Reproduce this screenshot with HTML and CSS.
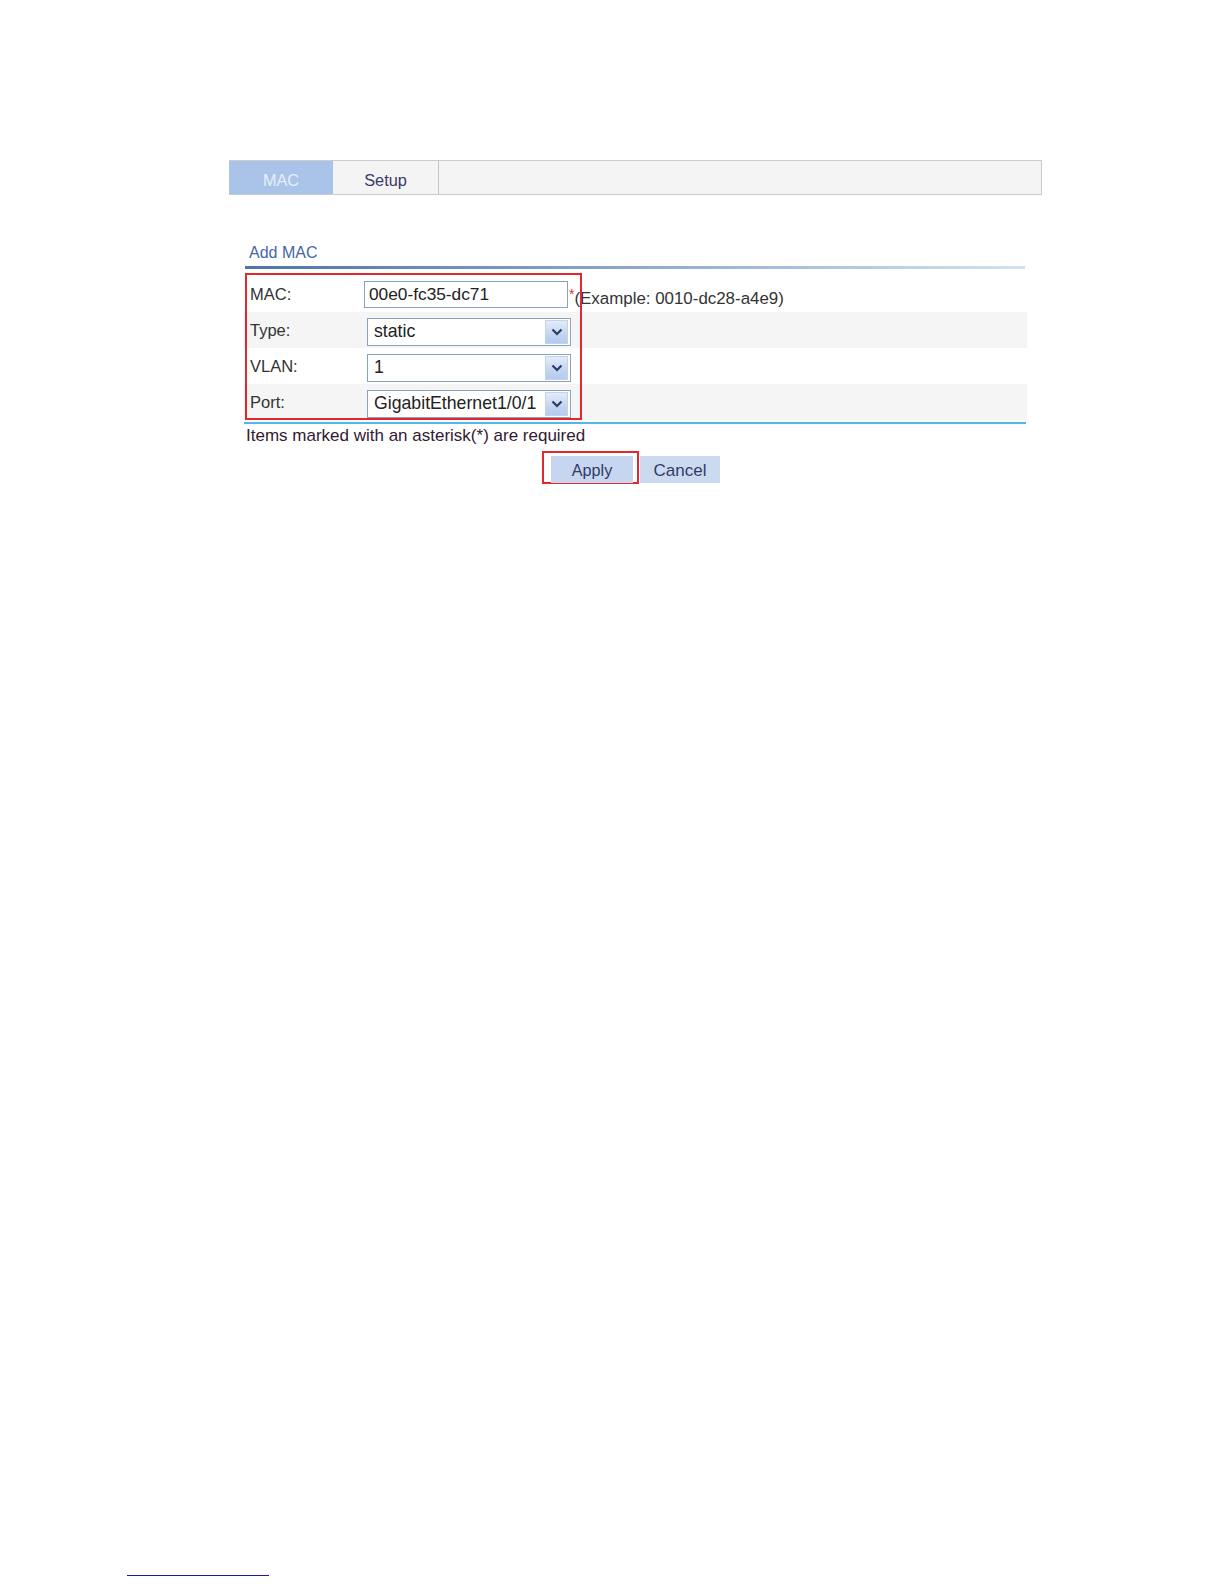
FILE: index.html
```html
<!DOCTYPE html>
<html>
<head>
<meta charset="utf-8">
<title>Add MAC</title>
<link rel="stylesheet" href="styles.css">
</head>
<body>
<div class="page">
  <div class="tabs">
    <div class="tab active">MAC</div>
    <div class="tab">Setup</div>
    <div class="tab-fill"></div>
  </div>

  <div class="panel">
    <div class="title">Add MAC</div>
    <div class="title-rule"></div>

    <div class="form">
      <div class="row">
        <div class="label">MAC:</div>
        <div class="field">
          <div class="textbox">00e0-fc35-dc71</div>
          <span class="req">*</span><span class="hint">(Example: 0010-dc28-a4e9)</span>
        </div>
      </div>
      <div class="row alt">
        <div class="label">Type:</div>
        <div class="field">
          <div class="select"><span class="sel-text">static</span><span class="sel-btn"><svg width="12" height="8" viewBox="0 0 12 8"><path d="M1.5 1.5 L6 6 L10.5 1.5" fill="none" stroke="#2b3b66" stroke-width="2.2"/></svg></span></div>
        </div>
      </div>
      <div class="row">
        <div class="label">VLAN:</div>
        <div class="field">
          <div class="select"><span class="sel-text">1</span><span class="sel-btn"><svg width="12" height="8" viewBox="0 0 12 8"><path d="M1.5 1.5 L6 6 L10.5 1.5" fill="none" stroke="#2b3b66" stroke-width="2.2"/></svg></span></div>
        </div>
      </div>
      <div class="row alt">
        <div class="label">Port:</div>
        <div class="field">
          <div class="select"><span class="sel-text">GigabitEthernet1/0/1</span><span class="sel-btn"><svg width="12" height="8" viewBox="0 0 12 8"><path d="M1.5 1.5 L6 6 L10.5 1.5" fill="none" stroke="#2b3b66" stroke-width="2.2"/></svg></span></div>
        </div>
      </div>
      <div class="highlight"></div>
    </div>
    <div class="form-rule"></div>

    <div class="note">Items marked with an asterisk(*) are required</div>

    <div class="buttons">
      <span class="btn-mark"><span class="btn">Apply</span></span><span class="btn cancel">Cancel</span>
    </div>
  </div>

  <div class="footnote"></div>
</div>
</body>
</html>
```

FILE: styles.css
```css
html, body {
  margin: 0;
  padding: 0;
  background: #ffffff;
}

body {
  font-family: "Liberation Sans", Arial, sans-serif;
  font-size: 17px;
  color: #333333;
}

.page {
  height: 1584px;
  display: flex;
  flex-direction: column;
  box-sizing: border-box;
  padding-top: 160px;
}

/* Tabs */
.tabs {
  display: flex;
  margin-left: 229px;
  width: 813px;
  height: 35px;
  box-sizing: border-box;
  border-top: 1px solid #cbcbcb;
  border-bottom: 1px solid #cbcbcb;
  border-right: 1px solid #cbcbcb;
  background: #f4f4f4;
}

.tab {
  display: flex;
  align-items: center;
  justify-content: center;
  font-size: 16.3px;
  color: #3a3a6a;
  padding-top: 5px;
  box-sizing: border-box;
}

.tab.active {
  width: 104px;
  background: #a9c4e8;
  color: #e6eefa;
}

.tab:nth-child(2) {
  width: 106px;
  border-right: 1px solid #c4c4c4;
}

.tab-fill {
  flex: 1;
}

/* Panel */
.panel {
  margin-left: 244px;
  width: 783px;
  margin-top: 47px;
}

.title {
  height: 22px;
  line-height: 22px;
  padding-left: 5px;
  font-size: 16px;
  color: #4567a6;
}

.title-rule {
  margin-top: 2px;
  margin-left: 1px;
  width: 780px;
  height: 3px;
  background: linear-gradient(to right, #4d74aa 0%, #7898c2 35%, #a8c0dc 70%, #d4e2ef 100%);
}

.form {
  position: relative;
  margin-top: 7px;
}

.row {
  display: flex;
  align-items: center;
  height: 36px;
}

.row.alt {
  background: #f5f5f5;
}

.label {
  width: 114px;
  padding-left: 6px;
  font-size: 16.5px;
  color: #333333;
}

.field {
  display: flex;
  align-items: center;
}

.textbox {
  width: 204px;
  height: 27px;
  box-sizing: border-box;
  border: 1px solid #8aa2bd;
  background: #fff;
  padding-left: 4px;
  line-height: 25px;
  font-size: 17.3px;
  color: #222;
  margin-top: 1px;
}

.req {
  color: #e03030;
  margin-left: 1px;
  font-size: 14px;
  align-self: flex-start;
  margin-top: 6px;
}

.hint {
  color: #333;
  font-size: 16.9px;
  margin-top: 9px;
}

.select {
  display: flex;
  align-items: center;
  width: 204px;
  height: 28px;
  box-sizing: border-box;
  border: 1px solid #8aa2bd;
  background: #fff;
  margin-left: 3px;
  margin-top: 3px;
}

.sel-text {
  flex: 1;
  padding-left: 6px;
  font-size: 17.7px;
  color: #222;
  white-space: nowrap;
  overflow: hidden;
}

.sel-btn {
  width: 23px;
  height: 24px;
  margin-right: 2px;
  box-sizing: border-box;
  border: 1px solid #c4d3ec;
  background: linear-gradient(to bottom, #e4ecfa 0%, #c6d6f2 55%, #b6caef 100%);
  display: flex;
  align-items: center;
  justify-content: center;
}

.highlight {
  position: absolute;
  left: 1px;
  top: -3px;
  width: 337px;
  height: 147px;
  box-sizing: border-box;
  border: 2px solid #e0282e;
  pointer-events: none;
}

.form-rule {
  margin-top: 2px;
  height: 2px;
  width: 782px;
  background: #52b9e6;
}

.note {
  height: 20px;
  line-height: 20px;
  padding-left: 2px;
  margin-top: 2px;
  color: #331a33;
}

.buttons {
  display: flex;
  align-items: flex-end;
  margin-top: 5px;
  margin-left: 298px;
}

.btn-mark {
  display: flex;
  border: 2px solid #e0282e;
  padding: 3px 4px 0 7px;
  height: 33px;
  box-sizing: border-box;
}

.btn {
  display: flex;
  align-items: center;
  justify-content: center;
  height: 27px;
  background: #c6d6f0;
  color: #333a66;
  font-size: 16.2px;
  box-sizing: border-box;
  padding-top: 2px;
}

.btn-mark .btn {
  width: 82px;
}

.btn.cancel {
  width: 80px;
  margin-left: 1px;
  margin-bottom: 1px;
  font-size: 17px;
  background: #ccdaf0;
}

.footnote {
  margin-top: auto;
  margin-bottom: 8px;
  margin-left: 127px;
  width: 142px;
  height: 1px;
  background: #1a1a9a;
}
```
